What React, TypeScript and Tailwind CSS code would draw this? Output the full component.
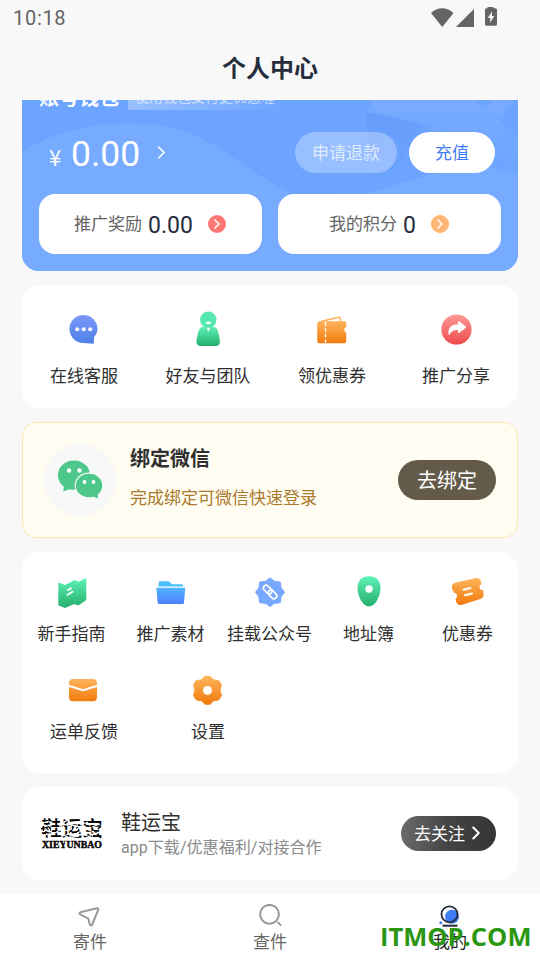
import type { ReactNode } from 'react';
import { ChevronRight } from 'lucide-react';
import clsx from 'clsx';

function Gradients() {
  return (
    <svg width="0" height="0" className="absolute" aria-hidden="true">
      <defs>
        <linearGradient id="blue" x1="0" y1="0" x2="0" y2="1">
          <stop offset="0" stopColor="#7c98fa" />
          <stop offset="1" stopColor="#4d81e6" />
        </linearGradient>
        <linearGradient id="green" x1="0" y1="0" x2="0" y2="1">
          <stop offset="0" stopColor="#5ef3b8" />
          <stop offset="1" stopColor="#25ae6a" />
        </linearGradient>
        <linearGradient id="orange" x1="0" y1="0" x2="0" y2="1">
          <stop offset="0" stopColor="#ffb45c" />
          <stop offset="1" stopColor="#f17a0e" />
        </linearGradient>
        <linearGradient id="red" x1="0" y1="0" x2="0" y2="1">
          <stop offset="0" stopColor="#fd9a95" />
          <stop offset="1" stopColor="#ef4a4e" />
        </linearGradient>
        <linearGradient id="folder" x1="0" y1="0" x2="0" y2="1">
          <stop offset="0" stopColor="#52b4ff" />
          <stop offset="1" stopColor="#4c82fd" />
        </linearGradient>
        <linearGradient id="facet" x1="0" y1="0" x2="0" y2="1">
          <stop offset="0" stopColor="#679efc" />
          <stop offset="1" stopColor="#6ca4ff" />
        </linearGradient>
        <linearGradient id="star" x1="0" y1="0" x2="0" y2="1">
          <stop offset="0" stopColor="#78abff" />
          <stop offset="1" stopColor="#6ca4ff" />
        </linearGradient>
      </defs>
    </svg>
  );
}

function Icon({ children }: { children: ReactNode }) {
  return (
    <svg width="36" height="36" viewBox="0 0 36 36" fill="none">
      {children}
    </svg>
  );
}

const ChatIcon = () => (
  <Icon>
    <path d="M17.500 4a14 14 0 0 1 14 14.200c0 3-1.500 5.500-3.500 8l-.2 6.600-10.300-.8A14 14 0 0 1 17.500 4z" fill="url(#blue)" />
    <circle cx="11.200" cy="18.300" r="2" fill="#fff" />
    <circle cx="17.700" cy="18.300" r="2" fill="#fff" />
    <circle cx="24.200" cy="18.300" r="2" fill="#fff" />
  </Icon>
);

const FriendIcon = () => (
  <Icon>
    <path
      d="M10 17.500q1.300-1.800 4-2.100h8.600q2.700.3 4 2.100 1.200 1.700 1.900 4.500l1.400 7.500c.5 3.400-1.200 5.500-4.200 5.500H11c-3.200 0-5-2.100-4.500-5.500L8 22q.7-2.800 2-4.500z"
      fill="url(#green)"
    />
    <circle cx="18.300" cy="8.700" r="8.200" fill="#56e8ae" />
    <rect x="16" y="10.800" width="5" height="2.200" rx="1.100" fill="#fff" />
    <path d="M16.700 16.800h3.600L18.500 20.800z" fill="#fff" />
  </Icon>
);

const WalletIcon = () => (
  <Icon>
    <path d="M7 10.500 24.500 6.200q1.200-.2 1.500 1l.8 3.600" stroke="#ffb25c" strokeWidth="1.600" strokeLinejoin="round" />
    <path
      d="M5.500 10.200h25a1.800 1.800 0 0 1 1.800 1.800v4a3 3 0 0 0 0 5.700V30a2.300 2.300 0 0 1-2.300 2.300H5.500A2.300 2.300 0 0 1 3.200 30V12.500a2.300 2.300 0 0 1 2.300-2.300z"
      fill="url(#orange)"
    />
    <path d="M11.500 11v20.500" stroke="#fff" strokeWidth="1.300" strokeDasharray="4 1.800" />
  </Icon>
);

const ShareIcon = () => (
  <Icon>
    <circle cx="18.500" cy="18.500" r="15.100" fill="url(#red)" />
    <path d="M11 24.500c-2-7 2-11.300 9-11.300v-2.500q.2-1 1-.4l6.800 5.200q.7.6 0 1.200l-6.700 5.200q-1 .5-1-.5l-.1-2.300c-4-.3-7 1.400-9 5.400z" fill="#fff" />
  </Icon>
);

const GuideIcon = () => (
  <Icon>
    <path d="M4.300 8.500 11 11l9.500-5 4 1.800 7.800-3.900v22.200l-8 5.300-4-1.400-9.300 4-6.700-2.700z" fill="url(#green)" />
    <path d="m14 16 3-1.700M13.500 20.800l5-3" stroke="#fff" strokeWidth="1.900" strokeLinecap="round" />
  </Icon>
);

const FolderIcon = () => (
  <Icon>
    <path d="M6.200 7.200h9.300l3.700 3h10.300l.8 2.200H5.200z" fill="#4cc0ff" />
    <path d="M3.300 13.800h29l-1.300 15a1.200 1.200 0 0 1-1.300 1.100H6a1.200 1.200 0 0 1-1.300-1.100z" fill="url(#folder)" />
  </Icon>
);

const LinkIcon = () => (
  <Icon>
    <path
      d="m18 3.800 4.300 3.400 6 .9.800 5.600 3.400 4.600-3.400 4.500-.8 5.900-6 .7L18 32.600l-4.300-3.200-6-.7-.8-5.900-3.400-4.500 3.400-4.600.8-5.600 6-.9z"
      fill="#78a7ff"
      stroke="#78a7ff"
      strokeLinejoin="round"
    />
    <g stroke="#fff" strokeWidth="1.700" transform="rotate(45 18 18)">
      <rect x="9.700" y="15.100" width="9.800" height="5.600" rx="2.800" />
      <rect x="16.500" y="15.100" width="9.800" height="5.600" rx="2.800" />
    </g>
  </Icon>
);

const PinIcon = () => (
  <Icon>
    <path d="M18 2.300c7 0 11.500 4.500 11.500 11.300C29.500 23 24 32.500 18 32.500S6.500 23 6.500 13.600C6.500 6.800 11 2.300 18 2.300z" fill="url(#green)" />
    <circle cx="18" cy="15" r="3.700" fill="#fff" />
  </Icon>
);

const TicketIcon = () => (
  <Icon>
    <path
      d="M5 8.800 26 4a4.500 4.500 0 0 1 5 3.500l.5 2.500a3.300 3.300 0 0 0 1.700 6.300l.4 3.700a4.500 4.500 0 0 1-3.500 5L11.500 30.900a4.500 4.500 0 0 1-5.400-3.200l-.6-2.700a3.300 3.300 0 0 0-1.700-6.200L2 14.500a4.500 4.500 0 0 1 3-5.700z"
      fill="url(#orange)"
    />
    <path d="m13.500 15.800 7-1.800M15 21.300l7-1.800" stroke="#fff" strokeWidth="2" strokeLinecap="round" />
  </Icon>
);

const MailIcon = () => (
  <Icon>
    <rect x="3" y="7" width="28" height="22.300" rx="4" fill="url(#orange)" />
    <path d="m2.500 13.700 14.500 4.600 14.500-4.600" stroke="#fff" strokeWidth="2" />
  </Icon>
);

const GearIcon = () => (
  <Icon>
    <path
      d="M15 4.300h5l3.500 3.500 5.300.8 2.700 4.300-1.500 5.400 1.500 5.200-2.700 4.300-5.300 1-3.500 3.400h-5l-3.500-3.400-5.300-1-2.700-4.300L5 18.300l-1.500-5.400 2.700-4.300 5.300-.8z"
      fill="url(#orange)"
      stroke="url(#orange)"
      strokeLinejoin="round"
    />
    <circle cx="17.500" cy="18.400" r="4.500" fill="#fff" />
  </Icon>
);

const WechatIcon = () => (
  <svg width="46" height="40" viewBox="0 0 46 40">
    <path d="M17 .5c9 0 16 6.300 16 14.500s-7 14.700-16 14.700a18 18 0 0 1-4.500-.5L6.300 31.500l.5-5C3 24 1 19.500 1 15 1 6.800 8 .5 17 .5z" fill="#4ec88a" />
    <path
      d="M32 13.200c8 0 13.800 5.500 13.800 12.300 0 4-1.600 7-4.600 9.300l.6 4.700-5.600-2.300c-1.300.4-2.700.6-4.200.6-8 0-13.800-5.500-13.800-12.300S24 13.200 32 13.200z"
      fill="#4ec88a"
      stroke="#f7f8f8"
      strokeWidth="1.200"
    />
    <g fill="#fff">
      <circle cx="12" cy="10.500" r="2.200" />
      <circle cx="22.500" cy="10.500" r="2.200" />
      <circle cx="27.500" cy="22" r="1.900" />
      <circle cx="36.500" cy="22" r="1.900" />
    </g>
  </svg>
);

function BrandLogo() {
  return (
    <div className="relative w-[62px] h-8 text-black text-center">
      <div className="h-[22px] text-[20.5px] leading-[22px] whitespace-nowrap font-medium">鞋运宝</div>
      <div className="h-[10px] font-['Liberation_Serif',serif] text-[9.8px] leading-[10px] font-bold whitespace-nowrap [-webkit-text-stroke:0.4px_black]">
        XIEYUNBAO
      </div>
      <svg className="absolute inset-0" width="62" height="32" viewBox="0 0 62 32" fill="none">
        <g stroke="#000" strokeWidth="1.500">
          <path d="m0 11 5-2m2-6 3-1m12 2 4 2m3-3 8-1m6 2h16M2 16l4-3m54-5-3 3M44 19l4-3m9 1 3 3" />
        </g>
        <g stroke="#fff" strokeWidth="1.300">
          <path d="m3 9 9-3m2 9 8-5m3-4 10 2m1 7 9-4m4 6 8-2M6 17l7-2m9 3 9-3m8-8 8-3m4 5 8-3M2 5l6-2m11 3 8-4m13 14 10 3m-32-9 9 3M3 12l8 2m15 6 12-2m7-7 8 3" />
          <path d="m20 3-3 14m14-11-2 13m13-15-1 13m13-12-3 14M9 3 8 18m17 5-1 7M5 7l1 12m17-15-1 14m14-12 1 13m12-13-1 12" strokeDasharray="2 2" />
        </g>
      </svg>
    </div>
  );
}

interface Entry {
  label: string;
  icon: ReactNode;
}

const services: Entry[] = [
  { label: '在线客服', icon: <ChatIcon /> },
  { label: '好友与团队', icon: <FriendIcon /> },
  { label: '领优惠券', icon: <WalletIcon /> },
  { label: '推广分享', icon: <ShareIcon /> },
];

const tools: Entry[] = [
  { label: '新手指南', icon: <GuideIcon /> },
  { label: '推广素材', icon: <FolderIcon /> },
  { label: '挂载公众号', icon: <LinkIcon /> },
  { label: '地址簿', icon: <PinIcon /> },
  { label: '优惠券', icon: <TicketIcon /> },
];

const moreTools: Entry[] = [
  { label: '运单反馈', icon: <MailIcon /> },
  { label: '设置', icon: <GearIcon /> },
];

function EntryItem({ label, icon, wide }: Entry & { wide?: boolean }) {
  return (
    <button className={clsx('flex flex-col items-center text-[17px] leading-6 text-[#303030] whitespace-nowrap', wide ? 'gap-[17px]' : 'gap-3')}>
      {icon}
      <span>{label}</span>
    </button>
  );
}

function StatusBar() {
  return (
    <div className="flex h-9 shrink-0 items-center justify-between pl-[13px] pr-[42px] text-[#646464]">
      <span className="text-[20px] leading-6 tracking-[0.7px]">10:18</span>
      <svg width="68" height="22" viewBox="0 0 68 22" fill="currentColor">
        <path d="M1 6C7-.3 17.500-.3 23.500 6L12.300 20z" />
        <path d="M44 2v18H26z" />
        <path
          fillRule="evenodd"
          d="M57.500 0h6v1.200h2A1.500 1.500 0 0 1 67 2.700v14.500a1.500 1.500 0 0 1-1.500 1.500h-9a1.500 1.500 0 0 1-1.500-1.500V2.700a1.500 1.500 0 0 1 1.500-1.500h1zM62 4.500l-4.200 6.500h2.400v4.700l4-6.700H62z"
        />
      </svg>
    </div>
  );
}

function WalletCard() {
  return (
    <section className="relative -mt-[22px] h-[193px] shrink-0 overflow-hidden rounded-b-[17px] bg-[#6ca4ff] px-[17px]">
      <svg className="absolute inset-0" width="496" height="193" viewBox="0 0 496 193">
        <path d="M345 34 402 47 366 107 345 114z" fill="url(#facet)" />
        <path d="M345 34 351 22h101l10 8 10-8h20l-14 21 18 17v40h-46l-26-50-14 8-1-11z" fill="url(#star)" />
        <path d="M0 74C42 47 84 44 128 46c62 5 88 45 145 71l72-2c40-10 66-22 98-25 18-3 36-1 53 8v95H0z" fill="#77abff" />
      </svg>
      <div className="relative flex h-8 items-center gap-[9px]">
        <span className="mt-2 text-[20px] leading-6 font-bold text-white">账号钱包</span>
        <span className="mt-[6px] h-[25px] w-[162px] bg-linear-to-r from-white/30 to-white/0 px-[7px] pt-px text-[14px] leading-[22px] text-white/60 whitespace-nowrap">
          使用钱包支付更优惠喔
        </span>
      </div>
      <div className="relative mt-[22px] flex h-[41px] items-center pr-[6px] text-white">
        <span className="ml-[7px] mt-[7px] w-[18px] text-center text-[22px] leading-6 font-['Noto_Sans_CJK_SC',sans-serif]">¥</span>
        <span className="ml-[7px] mt-[2px] text-[35.5px] leading-10">0.00</span>
        <ChevronRight className="ml-[11px]" size={21} strokeWidth={2} />
        <button className="ml-auto h-[41px] w-[102px] rounded-full bg-white/30 pt-[2px] text-[17px] text-white/70">申请退款</button>
        <button className="ml-3 h-[41px] w-[86px] rounded-full bg-white pt-[2px] text-[17px] text-[#3f7cf5]">充值</button>
      </div>
      <div className="relative mt-[21px] flex gap-4">
        <Balance label="推广奖励" value="0.00" color="bg-[#fd7774]" />
        <Balance label="我的积分" value="0" color="bg-[#ffb573]" />
      </div>
    </section>
  );
}

function Balance({ label, value, color }: { label: string; value: string; color: string }) {
  return (
    <div className="flex h-[60px] w-[223px] items-center justify-center rounded-2xl bg-white pr-px">
      <span className="mt-[2px] text-[17px] text-[#646464]">{label}</span>
      <span className="ml-[6px] mt-[3px] text-[23px] leading-7 text-[#252d3d]">{value}</span>
      <span className={clsx('ml-[15px] flex size-[18px] items-center justify-center rounded-full text-white', color)}>
        <ChevronRight size={16} strokeWidth={2.3} />
      </span>
    </div>
  );
}

function TabBar() {
  return (
    <nav className="grid h-[66px] shrink-0 grid-cols-3 bg-white text-[17px] leading-6 text-[#646464]">
      <button className="flex flex-col items-center pt-[10px]">
        <svg width="26" height="26" viewBox="0 0 26 26" fill="none" stroke="#999" strokeWidth="2" strokeLinejoin="round">
          <path d="M3.500 8.300 19.800 4.200c1.300-.3 1.900.4 1.400 1.600l-6 14.700c-.5 1.200-2 1.200-2.400-.1l-1.700-6.100-7.600-3.700c-1.200-.6-1.200-1.900 0-2.300z" />
        </svg>
        <span>寄件</span>
      </button>
      <button className="flex flex-col items-center pt-[10px]">
        <svg width="26" height="26" viewBox="0 0 26 26" fill="none" stroke="#999" strokeWidth="2">
          <circle cx="12.500" cy="10.300" r="9.400" />
          <path d="m20.500 18 3.600 3.600" />
        </svg>
        <span>查件</span>
      </button>
      <button className="flex flex-col items-center pt-[10px] text-[#252525]">
        <svg width="26" height="26" viewBox="0 0 26 26" fill="none">
          <circle cx="15" cy="12.700" r="7" fill="#3f7df5" />
          <circle cx="3.800" cy="18.700" r="1.500" fill="#3f7df5" />
          <circle cx="12.500" cy="10.300" r="8" stroke="#252d3d" strokeWidth="1.800" />
          <path d="M5.500 21.700h15" stroke="#252d3d" strokeWidth="2" />
        </svg>
        <span>我的</span>
      </button>
    </nav>
  );
}

export default function App() {
  return (
    <div className="relative flex h-[960px] w-[540px] flex-col overflow-hidden bg-[#f8f8f8] font-['Roboto','Noto_Sans_CJK_SC',sans-serif]">
      <Gradients />
      <StatusBar />
      <h1 className="flex h-16 shrink-0 items-center justify-center pt-[2px] text-[24px] font-bold text-[#252d3d]">个人中心</h1>

      <main className="flex h-[794px] shrink-0 flex-col gap-[14px] overflow-hidden px-[22px]">
        <WalletCard />

        <section className="grid h-[123px] shrink-0 grid-cols-4 rounded-[18px] bg-white pt-[26px]">
          {services.map((item) => (
            <EntryItem key={item.label} {...item} wide />
          ))}
        </section>

        {/* WeChat binding */}
        <section className="flex h-[116px] shrink-0 items-center rounded-[14px] border border-[#fbe8b4] bg-[#fffcf2] px-[21px]">
          <div className="flex size-[72px] items-center justify-center rounded-full bg-[#f7f8f8]">
            <WechatIcon />
          </div>
          <div className="ml-[14px] flex flex-col gap-[13px] pb-[6px]">
            <h2 className="text-[20px] leading-7 font-bold text-[#303030]">绑定微信</h2>
            <p className="text-[17px] leading-6 text-[#aa7a2c]">完成绑定可微信快速登录</p>
          </div>
          <button className="ml-auto h-10 w-[98px] rounded-full bg-[#635a4a] pt-[2px] text-[20px] text-white">去绑定</button>
        </section>

        <section className="h-[221px] shrink-0 rounded-[18px] bg-white pt-[22px]">
          <div className="grid grid-cols-5 pr-px">
            {tools.map((item) => (
              <EntryItem key={item.label} {...item} />
            ))}
          </div>
          <div className="mt-[26px] grid grid-cols-4">
            {moreTools.map((item) => (
              <EntryItem key={item.label} {...item} />
            ))}
          </div>
        </section>

        {/* Official account */}
        <section className="flex h-[93px] shrink-0 items-center rounded-[18px] bg-white pl-[19px] pr-[22px]">
          <BrandLogo />
          <div className="ml-[18px]">
            <h2 className="text-[20px] leading-7 text-[#303030]">鞋运宝</h2>
            <p className="text-[16px] leading-[22px] tracking-[0.05px] text-[#8a8a8a]">app下载/优惠福利/对接合作</p>
          </div>
          <button className="ml-auto flex h-[35px] w-[95px] items-center justify-center rounded-full bg-linear-to-r from-[#6b6b6b] via-[#444] to-[#353535] pl-1 pt-[2px] text-[17px] text-white">
            去关注
            <ChevronRight className="-mt-[3px]" size={22} strokeWidth={2.2} />
          </button>
        </section>
      </main>

      <TabBar />
      <span className="absolute left-[380px] top-[920px] font-['Open_Sans',sans-serif] text-[25.5px] leading-8 font-bold text-[#2a9612]">
        ITMOP.COM
      </span>
    </div>
  );
}
